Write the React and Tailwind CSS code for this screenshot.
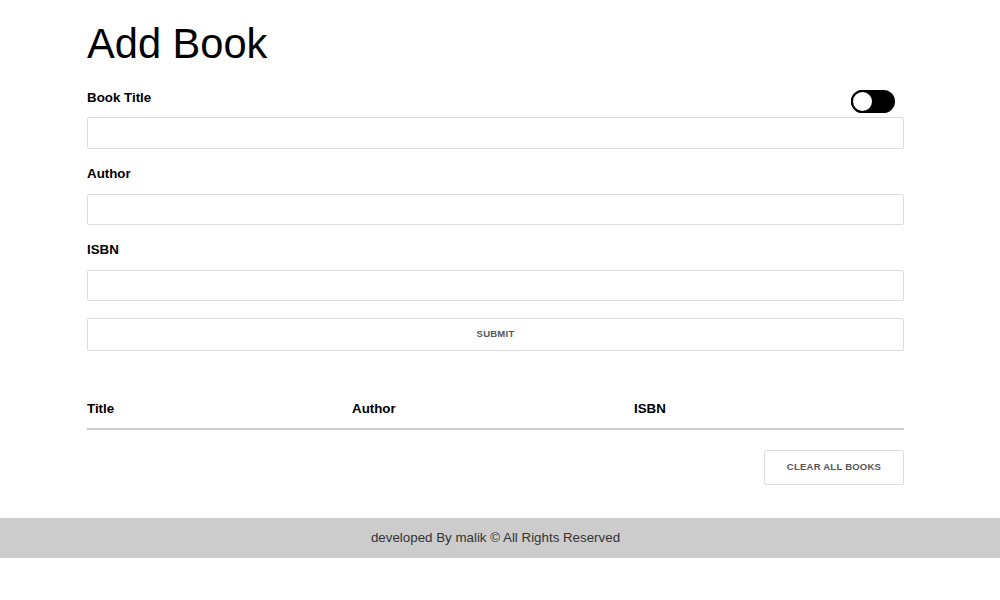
import React from 'react'

export default function App() {
  return (
    <div className="min-h-[600px] bg-white font-['Liberation_Sans',Arial,sans-serif] text-black">
      <div className="ml-[87px] w-[817px] pt-[20px]">
        <h1 className="text-[41.6px] leading-[48px] font-normal">Add Book</h1>

        {/* Form */}
        <div className="relative mt-[22px]">
          <button className="absolute right-[9px] top-[0px] w-[44px] h-[23px] rounded-full bg-black">
            <span className="absolute left-[0px] top-[0px] w-[23px] h-[23px] rounded-full bg-white border-2 border-black" />
          </button>

          <label className="block text-[13.33px] font-bold leading-[16px] h-[20px]">Book Title</label>
          <input className="mt-[7px] block w-full h-[32px] border border-[#ddd] rounded-[2px] outline-none" />

          <label className="block mt-[17px] text-[13.33px] font-bold leading-[16px] h-[20px]">Author</label>
          <input className="mt-[8px] block w-full h-[31px] border border-[#ddd] rounded-[2px] outline-none" />

          <label className="block mt-[17px] text-[13.33px] font-bold leading-[16px] h-[20px]">ISBN</label>
          <input className="mt-[8px] block w-full h-[31px] border border-[#ddd] rounded-[2px] outline-none" />

          <button className="mt-[17px] block w-full h-[33px] border border-[#ddd] rounded-[2px] bg-white text-[9.5px] font-bold text-[#555] tracking-wide">
            SUBMIT
          </button>
        </div>

        {/* Table */}
        <div className="mt-[50px] grid grid-cols-[265px_282px_1fr] border-b-2 border-[#ccc] pb-[11px] text-[13.33px] font-bold leading-[16px]">
          <span>Title</span>
          <span>Author</span>
          <span>ISBN</span>
        </div>

        <div className="flex justify-end mt-[20px]">
          <button className="w-[140px] h-[35px] border border-[#ddd] rounded-[2px] bg-white text-[9.5px] font-bold text-[#555] tracking-wide">
            CLEAR ALL BOOKS
          </button>
        </div>
      </div>

      <footer className="mt-[33px] h-[40px] pr-[9px] bg-[#cccccc] flex items-center justify-center text-[13.33px] text-[#333]">
        developed By malik © All Rights Reserved
      </footer>
    </div>
  )
}
